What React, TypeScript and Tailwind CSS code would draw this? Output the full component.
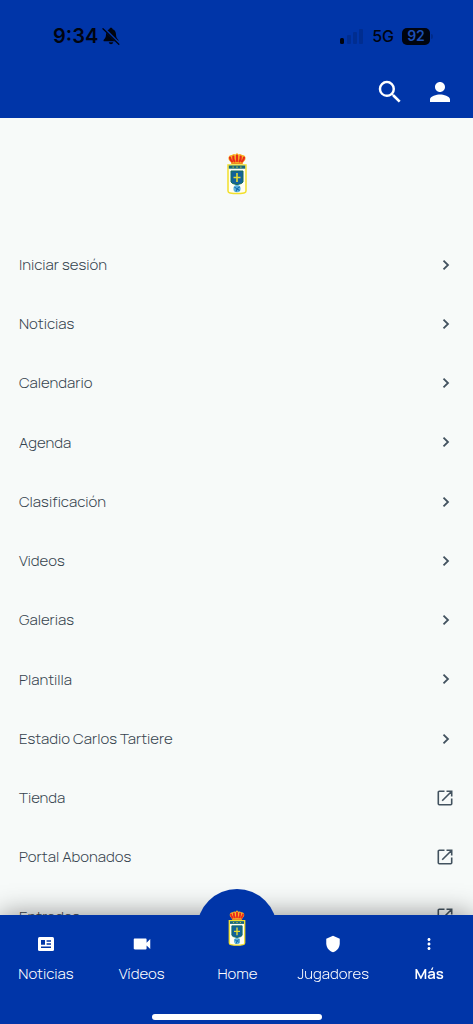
import type { ReactNode } from "react";
import { MdMoreVert, MdPerson, MdSearch, MdShield, MdVideocam } from "react-icons/md";

function Crest({ className }: { className: string }) {
  return (
    <svg viewBox="0 0 20 42" className={className} aria-hidden="true">
      <path d="M4.500 11.500 3.600 9.500Q.8 7.500 1.600 4.600 2.600 2.200 5 2.600 6.600 1 8.400 2L10 .4 11.600 2q1.800-1 3.400.6 2.400-.4 3.400 2 .8 2.900-2 4.900l-.9 2Z" fill="#f8b526" />
      <path d="M3 5.200Q3.300 7.600 5 9M6.300 4Q6 6.800 7.500 8.800M10 3v5.600M13.700 4q.3 2.800-1.200 4.800M17 5.200Q16.700 7.600 15 9" stroke="#ea2a1c" strokeWidth="2.200" strokeLinecap="round" fill="none" />
      <path d="M4.500 10.900h11" stroke="#ee8a20" strokeWidth="1.200" />
      <path d="M1 12.400h18v26q0 1.600-2 2-7 1.400-14 0-2-.4-2-2Z" fill="#fffef2" stroke="#f2df2c" strokeWidth="1.500" />
      <path d="M1.800 13h16.400v3.200H1.800Z" fill="#17677a" />
      <path d="M5.600 14.600h1M9.400 14.600h1.200M13.400 14.600h1" stroke="#e4d832" strokeWidth="1.200" />
      <path d="M4 18.500h12v11q0 1.600-6 2.700-6-1.100-6-2.700Z" fill="#12629a" stroke="#176d58" strokeWidth="1" />
      <path d="M9.200 20.500h1.600v3.700h2.700v1.600h-2.700v3.700H9.200v-3.700H6.500v-1.600h2.700Z" fill="#e6dc32" />
      <circle cx="10" cy="36.200" r="3.600" fill="#5fb4de" />
      <path d="M7.400 34.600 10 36.200l2.800-2M10 36.200l-1 3M10 36.200l2.600 1.800" stroke="#176db0" strokeWidth="1.100" fill="none" />
    </svg>
  );
}

function MutedBell() {
  return (
    <svg viewBox="0 0 18 18" className="size-[18px]" aria-label="Silencio">
      <path d="M9 .8c-1 0-1.600.7-1.700 1.500C5 3 4.100 5 4 7.500c-.1 2.800-.8 3.800-2 5-.8.800-.6 1.800.500 1.800h13c1.100 0 1.300-1 .500-1.800-1.200-1.200-1.900-2.200-2-5-.1-2.500-1-4.500-3.300-5.200C10.600 1.500 10 .8 9 .8ZM6.700 15.300Q7.200 17.300 9 17.300t2.300-2Z" fill="#00040f" />
      <path d="M1.800 1.600 16.800 16.200" stroke="#0035a8" strokeWidth="2.800" />
      <path d="M1 1.800 16.800 17.200" stroke="#00040f" strokeWidth="1.300" strokeLinecap="round" />
    </svg>
  );
}

function Chevron() {
  return (
    <svg viewBox="0 0 16 16" className="size-4" fill="none" stroke="#42525f" strokeWidth="1.800" aria-hidden="true">
      <path d="m6.500 3.600 4.500 4.400-4.500 4.400" />
    </svg>
  );
}

function OpenExternal() {
  return (
    <svg viewBox="0 0 16 16" className="size-4" fill="none" stroke="#42525f" strokeWidth="1.600" aria-hidden="true">
      <path d="M7.500 1.300H2.300a1 1 0 0 0-1 1v11.400a1 1 0 0 0 1 1h11.400a1 1 0 0 0 1-1V8.500M9.500 1.300h5.200v5.200M14.500 1.500 5.200 10.800" />
    </svg>
  );
}

function NewsIcon() {
  return (
    <svg viewBox="0 0 16 14" className="h-[14px] w-4" aria-hidden="true">
      <rect width="16" height="14" rx="1.500" fill="#fff" />
      <path d="M3 3h4v4.800H3ZM8.600 3.300H13V4.800H8.600ZM8.600 6.300H13v1.500H8.600ZM3 9.400h10v1.500H3Z" fill="#0035a8" />
    </svg>
  );
}

const menu: { label: string; external?: boolean }[] = [
  { label: "Iniciar sesión" },
  { label: "Noticias" },
  { label: "Calendario" },
  { label: "Agenda" },
  { label: "Clasificación" },
  { label: "Videos" },
  { label: "Galerias" },
  { label: "Plantilla" },
  { label: "Estadio Carlos Tartiere" },
  { label: "Tienda", external: true },
  { label: "Portal Abonados", external: true },
  { label: "Entradas", external: true },
];

const tabs: { label: string; icon: ReactNode; active?: boolean }[] = [
  { label: "Noticias", icon: <NewsIcon /> },
  { label: "Vídeos", icon: <MdVideocam className="size-[22px]" /> },
  { label: "Home", icon: <Crest className="h-9 w-[18px] -translate-y-4" /> },
  { label: "Jugadores", icon: <MdShield className="size-[18px]" /> },
  { label: "Más", icon: <MdMoreVert className="size-[18px]" />, active: true },
];

export default function App() {
  return (
    <div className="flex min-h-screen flex-col bg-[#f7faf9] font-['Manrope','Inter',sans-serif]">
      <header className="bg-[#0035a8]">
        <div className="flex h-[72px] items-center justify-between pr-[40px] pl-[53px] font-['Inter',sans-serif] text-[#00040f]">
          <div className="flex items-center gap-1">
            <span className="text-xl font-semibold">9:34</span>
            <MutedBell />
          </div>
          <div className="flex items-center gap-2">
            <svg viewBox="0 0 24 16" className="h-4 w-6" aria-label="Cobertura">
              <rect x="0" y="10" width="4" height="6" rx="1.500" fill="#00040f" />
              <rect x="7" y="7" width="4" height="9" rx="1" fill="#002d90" />
              <rect x="13" y="4" width="4" height="12" rx="1" fill="#002d90" />
              <rect x="19" y="1" width="4" height="15" rx="1" fill="#002d90" />
            </svg>
            <span className="text-base font-medium">5G</span>
            <div className="flex items-center gap-px">
              <span className="flex h-[17px] w-7 items-center justify-center rounded-[5px] bg-[#00040f] text-sm font-semibold text-[#1d50b4]">
                92
              </span>
              <span className="h-[5px] w-[2px] rounded-r bg-[#002b8a]" />
            </div>
          </div>
        </div>
        <div className="flex h-[46px] items-start justify-end gap-5 pr-[18px] text-white">
          <button type="button" aria-label="Buscar" className="pt-[5px]">
            <MdSearch className="size-[30px]" />
          </button>
          <button type="button" aria-label="Perfil" className="pt-[5px]">
            <MdPerson className="size-[30px]" />
          </button>
        </div>
      </header>

      <main className="flex flex-1 flex-col pb-[78px]">
        <div className="flex h-[117px] justify-center pt-[34px]">
          <Crest className="h-[43px] w-5" />
        </div>
        <ul className="flex flex-1 flex-col">
          {menu.map((item) => (
            <li key={item.label} className="flex min-h-[59px] flex-1">
              <a href="#" className="flex flex-1 items-center justify-between pr-5 pl-[19px] text-[15px] font-light text-[#36444f]">
                <span className="pt-px">{item.label}</span>
                {item.external ? (
                  <OpenExternal />
                ) : (
                  <Chevron />
                )}
              </a>
            </li>
          ))}
        </ul>
      </main>

      <nav className="fixed inset-x-0 bottom-0">
        <div className="absolute inset-0 shadow-[0_0_26px_rgba(0,0,0,0.45)]" />
        <div className="absolute -top-[26px] left-1/2 size-20 -translate-x-1/2 rounded-full bg-[#0035a8]" />
        <div className="relative bg-[#0035a8] pb-1">
          <div className="-mr-1 -ml-0.5 flex h-[99px] pt-[18px]">
            {tabs.map((tab) => (
              <a
                key={tab.label}
                href="#"
                className={`flex flex-1 flex-col items-center gap-[9px] text-[15px] leading-5 text-white ${tab.active ? "font-semibold" : "font-light"}`}
              >
                <span className="flex h-[22px] items-center">{tab.icon}</span>
                {tab.label}
              </a>
            ))}
          </div>
          <div className="mx-auto h-[6px] w-[170px] rounded-full bg-white" />
        </div>
      </nav>
    </div>
  );
}
